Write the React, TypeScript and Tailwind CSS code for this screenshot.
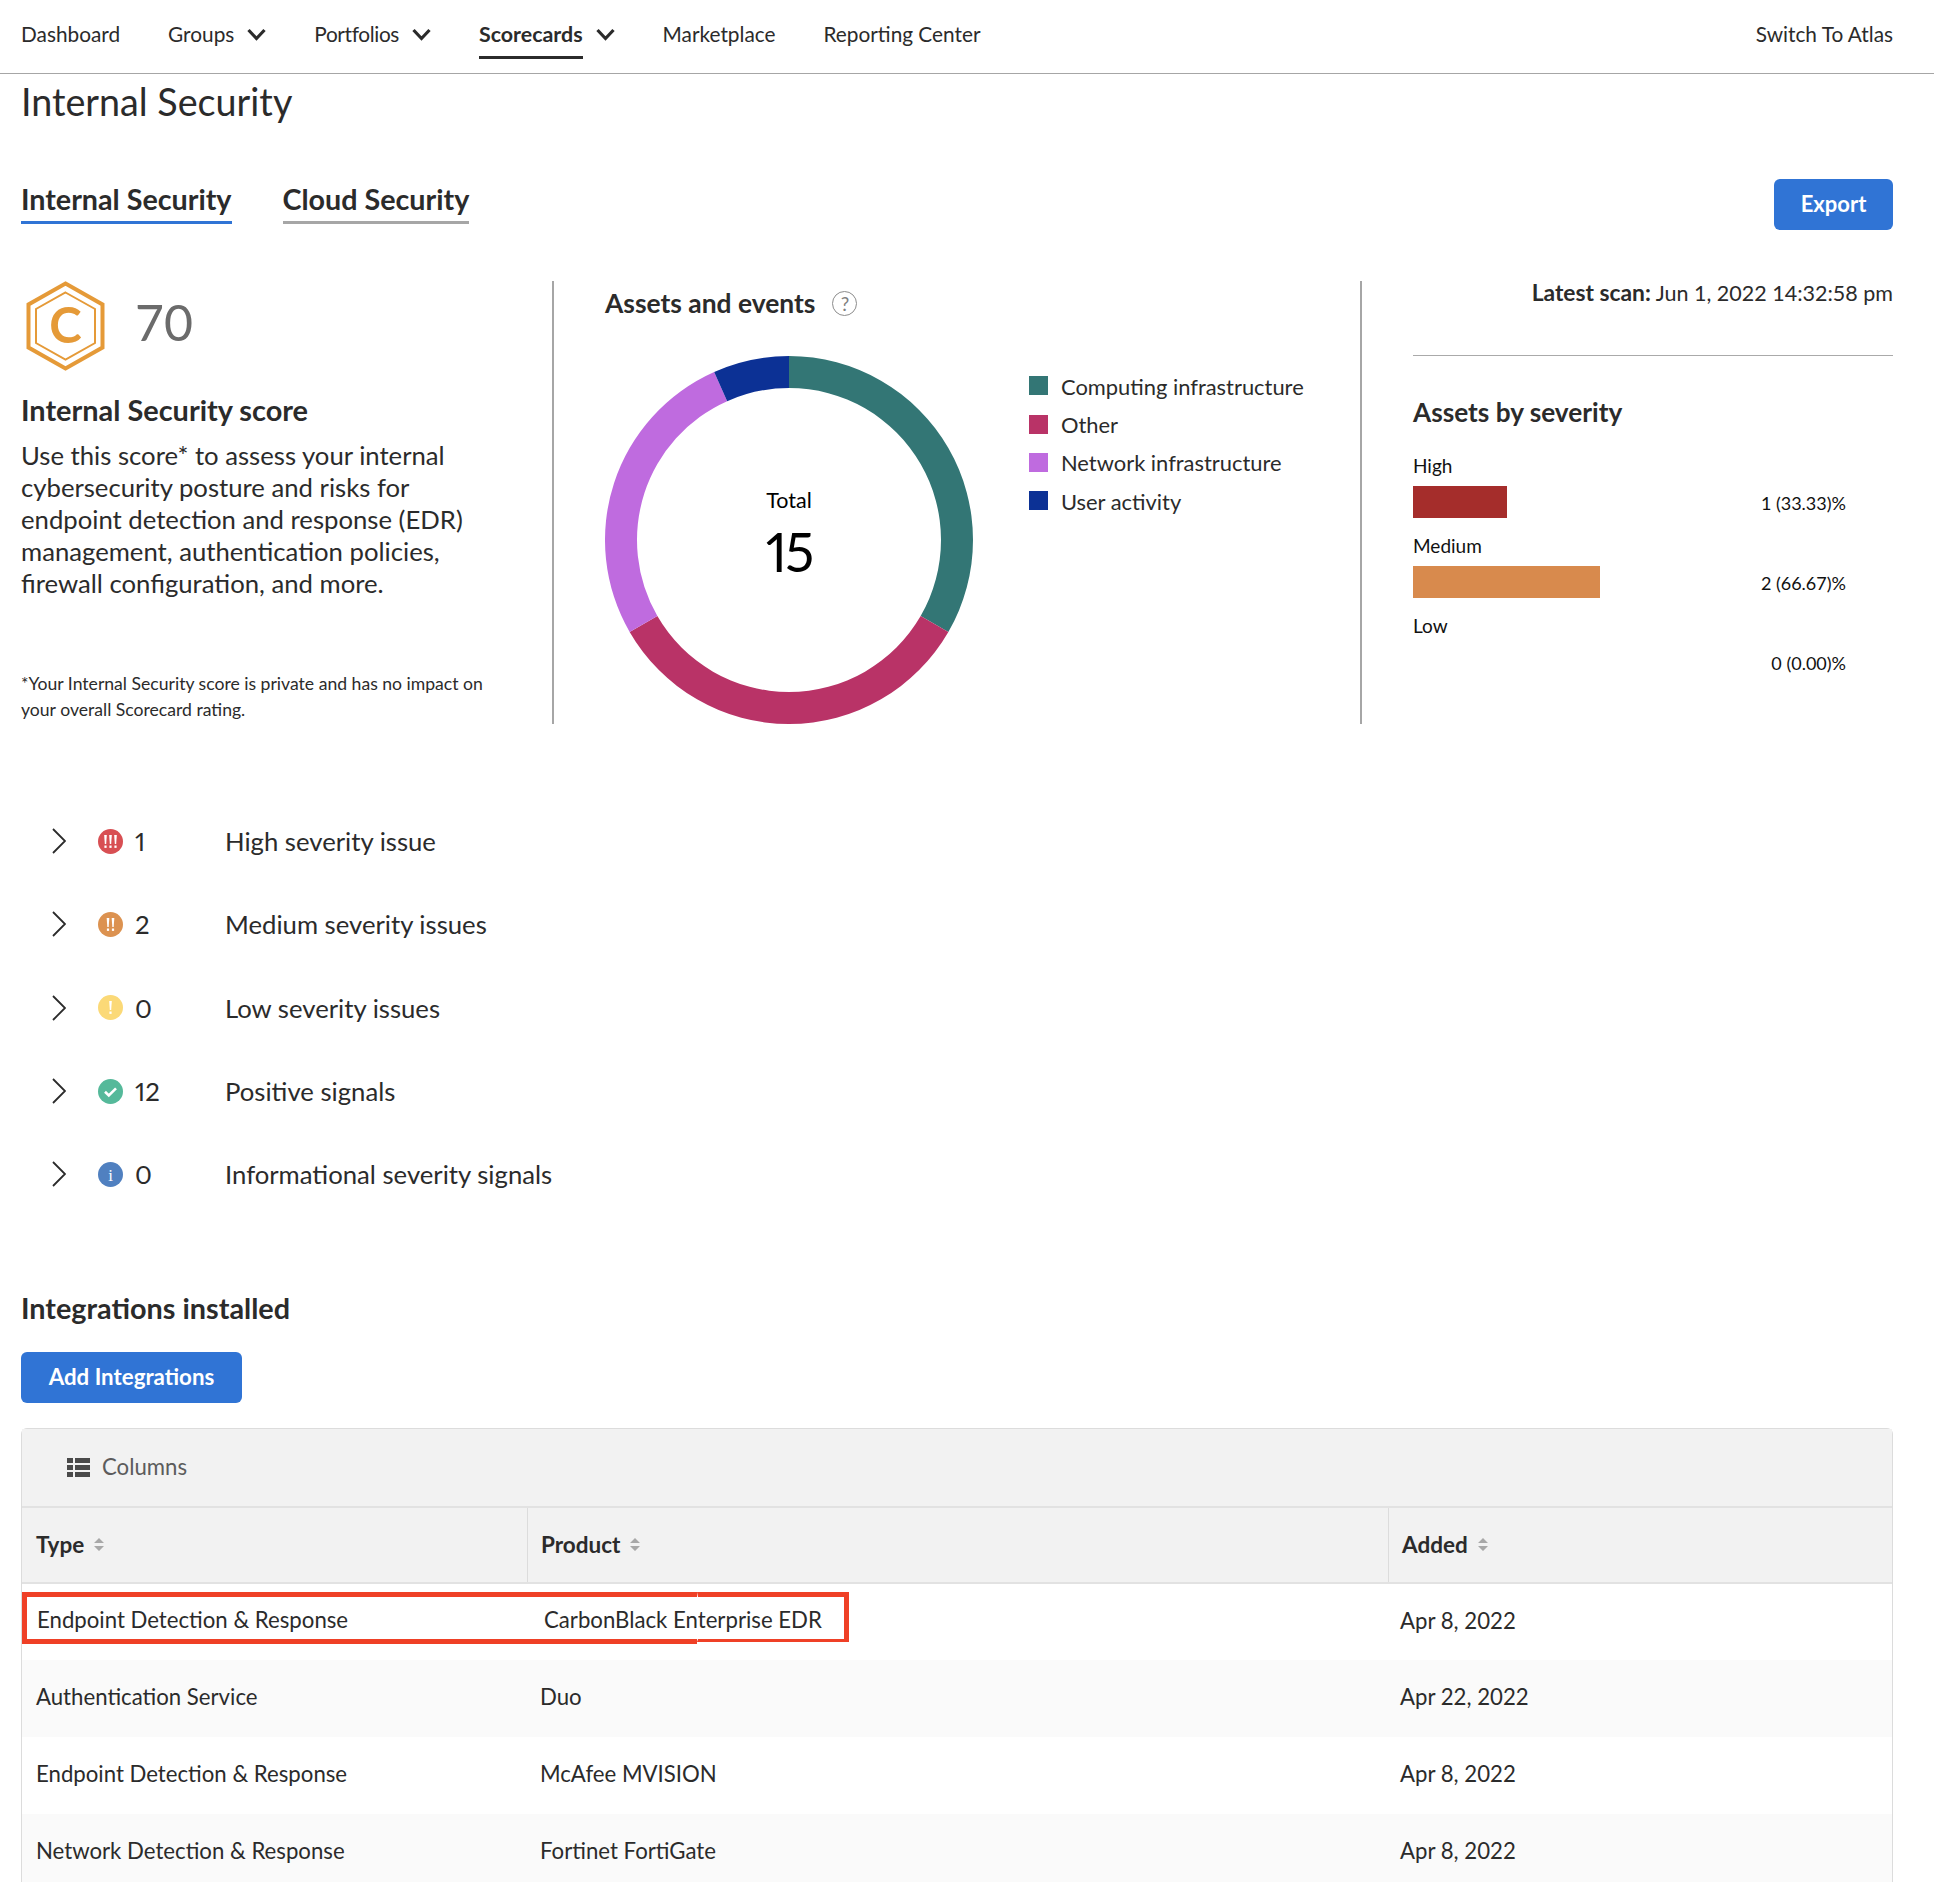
import React from 'react';

const font = { fontFamily: '"Lato", "Liberation Sans", sans-serif' };

const NavChevron = () => (
  <svg className="ml-[13px] h-[13px] w-[19px]" viewBox="0 0 19 13" fill="none" stroke="#2b2b2b" strokeWidth="3.2">
    <path d="M1.5 2l8 8.5 8-8.5" />
  </svg>
);

const RowChevron = () => (
  <svg className="h-[26px] w-[14px] shrink-0" viewBox="0 0 14 26" fill="none" stroke="#2b2b2b" strokeWidth="1.8">
    <path d="M1 1l12 12L1 25" />
  </svg>
);

const SeverityIcon = ({ kind }: { kind: 'high' | 'medium' | 'low' | 'positive' | 'info' }) => {
  const fills = { high: '#d84f53', medium: '#dc9250', low: '#fbd977', positive: '#55b99a', info: '#5080c0' };
  const marks = { high: [7.5, 12.5, 17.5], medium: [10, 15], low: [12.5], positive: [], info: [] } as Record<string, number[]>;
  return (
    <svg className="h-[25px] w-[25px] shrink-0" viewBox="0 0 25 25">
      <circle cx="12.5" cy="12.5" r="12.5" fill={fills[kind]} />
      {marks[kind].map((x) => (
        <g key={x} fill="#fff">
          <path d={`M${x - 1.3} 6h2.6l-.6 9h-1.4z`} />
          <rect x={x - 1.1} y="16.5" width="2.2" height="2.4" />
        </g>
      ))}
      {kind === 'positive' && <path d="M7 12.8l3.8 3.6 7.2-7" fill="none" stroke="#fff" strokeWidth="2.6" />}
      {kind === 'info' && (
        <text x="12.5" y="19" textAnchor="middle" fill="#fff" fontSize="17" fontFamily="Liberation Serif, serif">
          i
        </text>
      )}
    </svg>
  );
};

const SortIcon = () => (
  <svg className="ml-[10px] h-[13px] w-[10px]" viewBox="0 0 10 13" fill="#a8a8a8">
    <path d="M5 0L10 5H0zM5 13L0 8h10z" />
  </svg>
);

const Donut = () => {
  const c = 184;
  const seg = (from: number, to: number) => {
    const pt = (r: number, a: number) => {
      const t = (a * Math.PI) / 180;
      return `${c + r * Math.sin(t)} ${c - r * Math.cos(t)}`;
    };
    const large = to - from > 180 ? 1 : 0;
    return `M${pt(184, from)}A184 184 0 ${large} 1 ${pt(184, to)}L${pt(152, to)}A152 152 0 ${large} 0 ${pt(152, from)}Z`;
  };
  return (
    <svg className="h-[368px] w-[368px]" viewBox="0 0 368 368">
      <path d={seg(0, 120)} fill="#337675" />
      <path d={seg(120, 240)} fill="#b93367" />
      <path d={seg(240, 336)} fill="#bf6bdf" />
      <path d={seg(336, 360)} fill="#0c3195" />
    </svg>
  );
};

const legend = [
  ['Computing infrastructure', 'bg-[#337675]'],
  ['Other', 'bg-[#b93367]'],
  ['Network infrastructure', 'bg-[#bf6bdf]'],
  ['User activity', 'bg-[#0c3195]'],
];

const issues = [
  { kind: 'high', n: '1', label: 'High severity issue' },
  { kind: 'medium', n: '2', label: 'Medium severity issues' },
  { kind: 'low', n: '0', label: 'Low severity issues' },
  { kind: 'positive', n: '12', label: 'Positive signals' },
  { kind: 'info', n: '0', label: 'Informational severity signals' },
] as const;

const rows = [
  ['Authentication Service', 'Duo', 'Apr 22, 2022'],
  ['Endpoint Detection & Response', 'McAfee MVISION', 'Apr 8, 2022'],
  ['Network Detection & Response', 'Fortinet FortiGate', 'Apr 8, 2022'],
];

export default function App() {
  return (
    <div style={font} className="h-[1882px] overflow-hidden bg-white text-[#2b2b2b]">
      {/* Nav */}
      <header className="flex h-[74px] items-center gap-12 border-b border-[#a6a6a6] pr-[41px] pb-[5px] pl-[21px] text-[20.8px] leading-[28px]">
        <a>Dashboard</a>
        <a className="flex items-center">Groups<NavChevron /></a>
        <a className="flex items-center tracking-[-0.35px]">Portfolios<NavChevron /></a>
        <a className="flex items-center text-[21.4px] font-bold">
          <span className="relative">
            Scorecards
            <span className="absolute top-[35.5px] left-0 h-[3px] w-full bg-[#2b2b2b]" />
          </span>
          <NavChevron />
        </a>
        <a>Marketplace</a>
        <a>Reporting Center</a>
        <a className="ml-auto">Switch To Atlas</a>
      </header>

      <main className="pr-[41px] pl-[21px]">
        <h1 className="mt-[6px] text-[37.7px] leading-[44px] font-normal">Internal Security</h1>

        {/* Tabs */}
        <div className="mt-[55px] flex items-start justify-between">
          <div className="flex gap-[51px] text-[28.7px] leading-[32px] font-bold">
            <div className="border-b-[3px] border-[#3074d5] pt-[4px] pb-[6px]">Internal Security</div>
            <div className="border-b-[3px] border-[#a6a6a6] pt-[4px] pb-[6px]">Cloud Security</div>
          </div>
          <button className="h-[51px] w-[119px] rounded-md bg-[#3074d5] pb-[2px] text-[22px] font-bold text-white">Export</button>
        </div>

        {/* Summary */}
        <section className="mt-[51px] flex h-[443px]">
          <div className="w-[533px] shrink-0 border-r-2 border-[#a6a6a6]">
            <div className="flex items-center pl-[5px]">
              <svg className="h-[90px] w-[79px]" viewBox="0 0 79 90" fill="none" stroke="#e59a38">
                <path d="M39.5 2.5L76.5 23.5V66.5L39.5 87.5L2.5 66.5V23.5Z" strokeWidth="4" />
                <path d="M39.5 11.5L69 28V62L39.5 78.5L10 62V28Z" strokeWidth="2" />
                <text x="39.5" y="61.5" textAnchor="middle" fill="#e59a38" stroke="none" fontSize="49" fontWeight="700" fontFamily="Lato, sans-serif">
                  C
                </text>
              </svg>
              <span className="mb-[8px] ml-[30px] text-[50px] leading-[56px] font-normal text-[#6b6b6b]">70</span>
            </div>
            <h2 className="mt-[22px] text-[28.9px] leading-[34px] font-bold">Internal Security score</h2>
            <p className="mt-[12px] text-[25.7px] leading-[32px] whitespace-nowrap">
              Use this score* to assess your internal
              <br />
              cybersecurity posture and risks for
              <br />
              endpoint detection and response (EDR)
              <br />
              management, authentication policies,
              <br />
              firewall configuration, and more.
            </p>
            <p className="mt-[72px] text-[17.6px] leading-[26px] whitespace-nowrap">
              *Your Internal Security score is private and has no impact on
              <br />
              your overall Scorecard rating.
            </p>
          </div>

          <div className="w-[808px] shrink-0 border-r-2 border-[#a6a6a6] pl-[51px]">
            <div className="flex items-center pt-[7px] text-[26.4px] leading-[30px] font-bold">
              Assets and events
              <span className="ml-[17px] flex h-[25px] w-[25px] items-center justify-center rounded-full border-[1.5px] border-[#8c8c8c] text-[19px] leading-none font-normal text-[#808080]">
                ?
              </span>
            </div>
            <div className="mt-[38px] flex items-start">
              <div className="relative">
                <Donut />
                <div className="absolute inset-0 flex flex-col items-center pt-[130px] text-black">
                  <span className="text-[21.5px] leading-[28px]">Total</span>
                  <span className="mt-[6px] text-[54px] leading-[64px] font-normal tracking-[-2px] proportional-nums">15</span>
                </div>
              </div>
              <ul className="mt-[20px] ml-[56px] flex flex-col gap-[18.8px] text-[21.9px]">
                {legend.map(([name, swatch]) => (
                  <li key={name} className="flex h-[19.5px] items-center gap-[13px] whitespace-nowrap">
                    <span className={`h-[19px] w-[19px] ${swatch}`} />
                    <span className="pt-[3px]">{name}</span>
                  </li>
                ))}
              </ul>
            </div>
          </div>

          <div className="flex-1 pl-[51px]">
            <p className="h-[22px] text-right text-[21.5px] leading-[22px]">
              <b className="text-[22.8px]">Latest scan:</b> Jun 1, 2022 14:32:58 pm
            </p>
            <hr className="mt-[52px] border-[#aaa]" />
            <h2 className="mt-[41px] text-[26.2px] leading-[30px] font-bold">Assets by severity</h2>
            <div className="mt-[27px] flex flex-col gap-[16px] text-[19px] leading-[24px] text-[#111]">
              <div>
                High
                <div className="mt-[8px] flex h-[32px] items-center pr-[47px] text-[18px]">
                  <span className="h-full w-[94px] bg-[#a52d2b]" />
                  <span className="mt-[2px] ml-auto">1 (33.33)%</span>
                </div>
              </div>
              <div>
                Medium
                <div className="mt-[8px] flex h-[32px] items-center pr-[47px] text-[18px]">
                  <span className="h-full w-[187px] bg-[#d88a4d]" />
                  <span className="mt-[2px] ml-auto">2 (66.67)%</span>
                </div>
              </div>
              <div>
                Low
                <div className="mt-[8px] flex h-[32px] items-center justify-end pt-[2px] pr-[47px] text-[18px]">0 (0.00)%</div>
              </div>
            </div>
          </div>
        </section>

        {/* Issue groups */}
        <section className="mt-[75.5px]">
          {issues.map((i) => (
            <div key={i.label} className="flex h-[83.33px] items-center pl-[31px] text-[25.7px]">
              <RowChevron />
              <span className="ml-[32px]">
                <SeverityIcon kind={i.kind} />
              </span>
              <span className="ml-[12px] w-[90px] proportional-nums">{i.n}</span>
              <span>{i.label}</span>
            </div>
          ))}
        </section>

        {/* Integrations */}
        <h2 className="mt-[74px] text-[28.8px] leading-[36px] font-bold">Integrations installed</h2>
        <button className="mt-[25.5px] h-[51px] w-[221px] rounded-md bg-[#3074d5] text-[22.3px] font-bold text-white">Add Integrations</button>

        <div className="relative mt-[25px] rounded-t-md border border-[#dcdcdc] text-[22.2px]">
          <div className="flex h-[79px] items-center border-b-2 border-[#e2e2e2] bg-[#f2f2f2] pl-[45px] text-[#5c5c5c]">
            <svg className="h-[19px] w-[23px]" viewBox="0 0 23 19" fill="#4a4a4a">
              <path d="M0 0h6v5H0zM8 0h15v5H8zM0 7h6v5H0zM8 7h15v5H8zM0 14h6v5H0zM8 14h15v5H8z" />
            </svg>
            <span className="ml-[12px]">Columns</span>
          </div>
          <div className="grid h-[76px] grid-cols-[506px_861px_1fr] border-b-2 border-[#e2e2e2] bg-[#f2f2f2] text-[22.5px] font-bold">
            {['Type', 'Product', 'Added'].map((h, idx) => (
              <div key={h} className={`flex items-center ${idx === 0 ? 'pl-[14px]' : 'pl-[13px]'} ${idx < 2 ? 'border-r border-[#dcdcdc]' : ''}`}>
                {h}
                <SortIcon />
              </div>
            ))}
          </div>
          <div className="grid h-[76px] grid-cols-[506px_861px_1fr] items-center">
            <div className="pb-[4px] pl-[15px]">Endpoint Detection &amp; Response</div>
            <div className="pb-[4px] pl-[16px]">CarbonBlack Enterprise EDR</div>
            <div className="pb-[2px] pl-[11px]">Apr 8, 2022</div>
          </div>
          {rows.map(([type, product, added], idx) => (
            <div key={product} className={`grid h-[77px] grid-cols-[506px_861px_1fr] items-center ${idx % 2 === 0 ? 'bg-[#fafafa]' : 'bg-white'}`}>
              <div className="pb-[2px] pl-[14px]">{type}</div>
              <div className="pb-[2px] pl-[12px]">{product}</div>
              <div className="pb-[2px] pl-[11px]">{added}</div>
            </div>
          ))}

          {/* red highlight laid over the first row */}
          <div className="absolute top-[163px] left-[0px] h-[52px] w-[675px] border-[5px] border-r-0 border-[#ef4026]" />
          <div className="absolute top-[163px] left-[675px] h-[50px] w-[152px] border-[5px] border-b-[3px] border-l-[1px] border-[#ef4026] border-l-white/70" />
        </div>
      </main>
    </div>
  );
}
